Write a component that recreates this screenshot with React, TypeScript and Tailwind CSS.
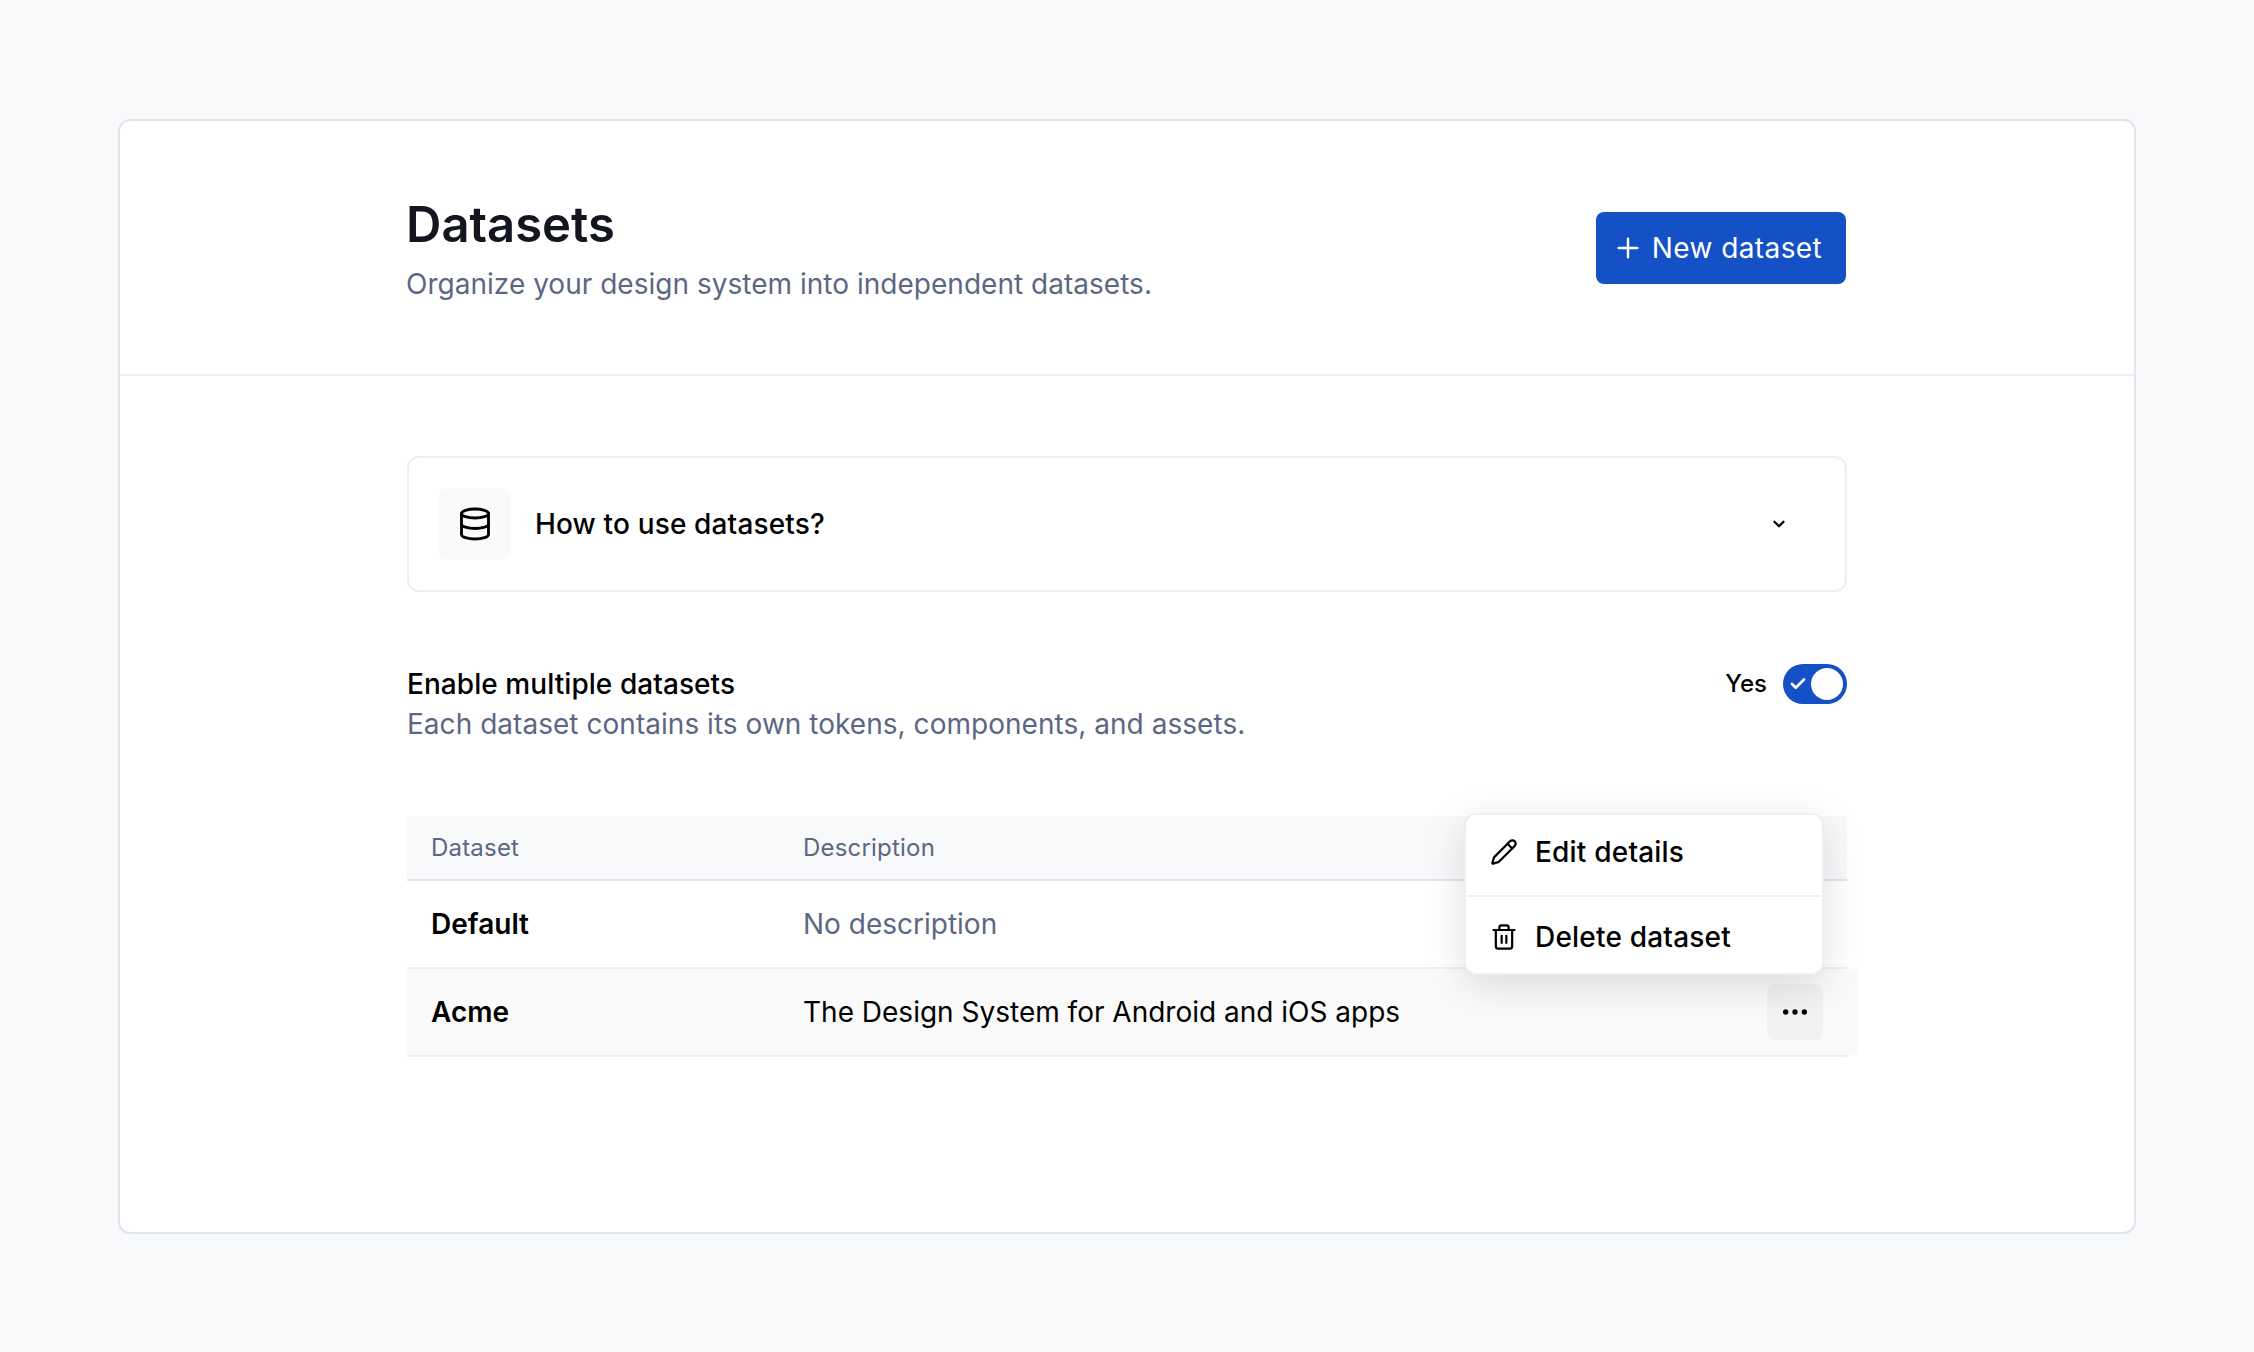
import React from 'react';
import { Check, ChevronDown, Database, Ellipsis, Pencil, Plus, Trash2 } from 'lucide-react';

const fontInter = { fontFamily: 'Inter, sans-serif' };

export default function App() {
    return (
        <div style={fontInter} className="min-h-[1352px] bg-[#f8f9fb] pt-[119px] px-[118px] antialiased">
            <div className="h-[1115px] bg-white border-2 border-[#e2e4ec] rounded-xl">
                {/* page header */}
                <div className="h-[255px] border-b-2 border-[#eeeff3] pl-[287px] pr-[288px] flex items-start justify-between">
                    <div className="pt-[75px]">
                        <h1 className="-ml-px text-[49px] leading-[58px] font-semibold text-[#14161f]">Datasets</h1>
                        <p className="-ml-px mt-[10px] text-[28px] leading-[40px] tracking-[0.02px] text-[#5c6784]">Organize your design system into independent datasets.</p>
                    </div>
                    <button className="mt-[91px] w-[250px] h-[72px] pr-2 bg-[#1450c6] rounded-lg text-white text-[28px] font-normal tracking-[0.4px] flex items-center justify-center gap-2">
                        <Plus size={32} strokeWidth={1.8} />
                        New dataset
                    </button>
                </div>

                <div className="pl-[287px] pr-[287px] pt-[80px]">
                    {/* help accordion */}
                    <div className="h-[136px] border-2 border-[#eeeff3] rounded-xl flex items-center pl-[30px] pr-[57px]">
                        <div className="w-[72px] h-[72px] bg-[#fafafa] rounded-lg flex items-center justify-center text-black">
                            <Database size={36} strokeWidth={1.9} />
                        </div>
                        <span className="ml-6 text-[28px] font-medium tracking-[0.15px] text-black">How to use datasets?</span>
                        <ChevronDown size={18} strokeWidth={3} className="ml-auto text-black" />
                    </div>

                    {/* enable toggle */}
                    <div className="mt-[72px] flex items-start justify-between">
                        <div>
                            <p className="text-[28px] leading-[40px] font-medium tracking-[0.06px] text-black">Enable multiple datasets</p>
                            <p className="text-[28px] leading-[40px] tracking-[0.035px] text-[#5c6784]">Each dataset contains its own tokens, components, and assets.</p>
                        </div>
                        <div className="flex items-center gap-4">
                            <span className="text-[24px] font-medium text-black">Yes</span>
                            <div className="w-16 h-10 bg-[#1450c6] rounded-full flex items-center justify-between pl-[6px] pr-1 text-white">
                                <Check size={18} strokeWidth={3.5} />
                                <div className="w-8 h-8 bg-white rounded-full" />
                            </div>
                        </div>
                    </div>

                    {/* table */}
                    <div className="relative mt-[72px]">
                        <div className="h-[65px] bg-[#f8f9fb] border-b-2 border-[#e5e6eb] flex items-center px-6 text-[24px] font-normal tracking-[0.2px] text-[#5c6784]">
                            <div className="w-[372px]">Dataset</div>
                            <div>Description</div>
                        </div>
                        <div className="h-[88px] border-b-2 border-[#eeeff3] flex items-center px-6 text-[28px]">
                            <div className="w-[372px] font-semibold text-black">Default</div>
                            <div className="text-[#5c6784]">No description</div>
                        </div>
                        <div className="h-[88px] border-b-2 border-[#eeeff3]">
                            <div className="h-full -mr-3 bg-[#fafafa] flex items-center pl-6 pr-9 text-[28px]">
                                <div className="w-[372px] font-semibold text-black">Acme</div>
                                <div className="text-black">The Design System for Android and iOS apps</div>
                                <button className="ml-auto w-14 h-14 bg-[#f2f2f2] rounded-lg flex items-center justify-center text-black">
                                    <Ellipsis size={32} strokeWidth={2} />
                                </button>
                            </div>
                        </div>

                        {/* row action menu */}
                        <div className="absolute right-[23px] top-[-3px] w-[360px] bg-white border-2 border-[#eeeff3] rounded-xl shadow-[0_10px_40px_rgba(0,0,0,0.13)] text-[28px] font-medium tracking-[0.2px] text-black">
                            <div className="h-20 pb-[6px] flex items-center gap-[17px] pl-[24px]">
                                <Pencil size={28} strokeWidth={1.9} />
                                Edit details
                            </div>
                            <div className="h-[78px] pt-1 border-t-2 border-[#eeeff3] flex items-center gap-[17px] pl-[24px]">
                                <Trash2 size={28} strokeWidth={1.9} />
                                Delete dataset
                            </div>
                        </div>
                    </div>
                </div>
            </div>
        </div>
    );
}
